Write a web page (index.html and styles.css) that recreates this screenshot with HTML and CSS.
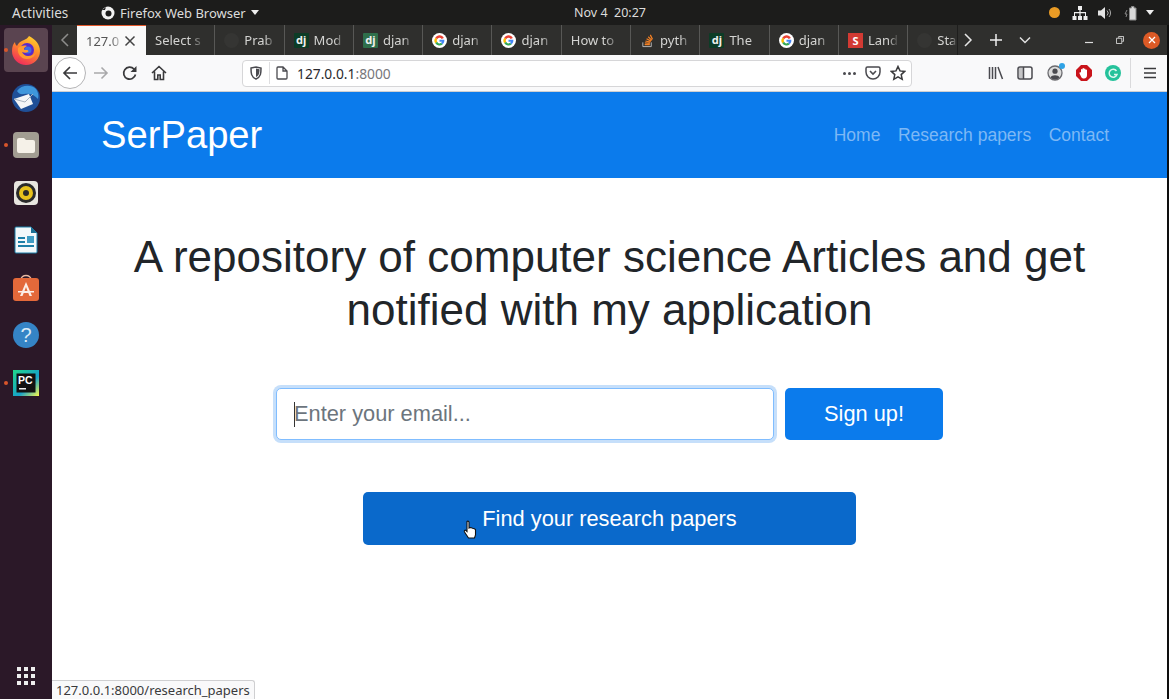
FILE: index.html
```html
<!DOCTYPE html>
<html lang="en">
<head>
    <meta charset="UTF-8">
    <meta name="viewport" content="width=device-width, initial-scale=1.0">
    <title>SerPaper</title>
    <link rel="stylesheet" href="styles.css">
</head>
<body>
    <svg class="defs" width="0" height="0">
        <symbol id="google" viewBox="0 0 16 16">
            <circle cx="8" cy="8" r="8" fill="#fff"/>
            <path d="M12.6 5.2A5.3 5.3 0 0 0 3.5 5l2 1.600A2.800 2.800 0 0 1 10.300 6.300z" fill="#ea4335"/>
            <path d="M3.500 5a5.300 5.300 0 0 0 0 6l2-1.600a2.800 2.800 0 0 1 0-2.800z" fill="#fbbc05"/>
            <path d="M3.500 11a5.300 5.300 0 0 0 8 1l-1.900-1.500a2.800 2.800 0 0 1-4.100-1.100z" fill="#34a853"/>
            <path d="M11.500 12a5.300 5.300 0 0 0 1.700-4.800H8v2.200h2.800a2.500 2.500 0 0 1-1.200 1.100z" fill="#4285f4"/>
        </symbol>
    </svg>

    <div class="topbar">
        <span class="activities">Activities</span>
        <span class="app-menu">
            <svg width="16" height="16" viewBox="0 0 16 16"><circle cx="8" cy="8" r="6.500" fill="#f2f2f2"/><circle cx="8.500" cy="8.500" r="3" fill="#1c1c1c"/><path d="M2 5l4-3-1 3z" fill="#1c1c1c"/></svg>
            Firefox Web Browser
            <i class="arrow-down"></i>
        </span>
        <span class="clock">Nov 4&nbsp;&nbsp;20:27</span>
        <span class="tray">
            <i class="tray-dot"></i>
            <svg class="tray-net" width="16" height="14" viewBox="0 0 16 14"><path d="M6 0h4v4H8.600v2H14v4h1.500v4h-4v-4H13V7.200H8.600V10H10v4H6v-4h1.400V7.200H3V10h1.500v4h-4v-4H2V6h5.400V4H6z" fill="#eee"/></svg>
            <svg class="tray-vol" width="16" height="14" viewBox="0 0 16 14"><path d="M1 4.500h3L8 1v12L4 9.500H1z" fill="#e4e4e4"/><path d="M10 4.500a3.500 3.500 0 0 1 0 5M12 3a6 6 0 0 1 0 8" stroke="#aaa" fill="none"/></svg>
            <svg class="tray-bat" width="16" height="16" viewBox="0 0 16 16"><path d="M5.500 3h2V1.500h2.500V3h2v12H5.500z" fill="#d8d8d8" stroke="#8a8a8a"/><path d="M3 5L1 9h2l-1 3" stroke="#888" fill="none"/></svg>
            <i class="arrow-down"></i>
        </span>
    </div>

    <div class="desktop">
        <nav class="dock">
            <div class="dock-item dock-active">
                <i class="run-dot"></i>
                <svg width="30" height="30" viewBox="0 0 30 30">
                    <defs>
                        <linearGradient id="ffbody" x1="0.800" y1="0" x2="0.300" y2="1">
                            <stop offset="0" stop-color="#ffd52e"/>
                            <stop offset="0.450" stop-color="#ff8a2b"/>
                            <stop offset="1" stop-color="#ee2a5d"/>
                        </linearGradient>
                    </defs>
                    <path d="M18 1c6 3 11 8 11 15a14 14 0 0 1-28 0c0-4 1-7 3-9 0 2 1 3 2 4 1-3 4-5 7-6 2-1 4-2 5-4z" fill="url(#ffbody)"/>
                    <circle cx="16" cy="15" r="7" fill="#592acb"/>
                    <circle cx="17" cy="15" r="3.500" fill="#3f6fe0"/>
                    <path d="M7 13c-1 6 3 11 9 11 5 0 8-3 9-7-2 3-5 4-8 4-3 0-5-2-6-4 2 1 4 1 6 0 1-1 0-2-1-2-2 0-3 0-3-1 0-1 1-2 3-3-3-1-7 0-9 2z" fill="#ff9a2e"/>
                </svg>
            </div>
            <div class="dock-item">
                <svg width="30" height="30" viewBox="0 0 30 30">
                    <circle cx="15" cy="15" r="14" fill="#1f4f97"/>
                    <path d="M6 8C10 2 20 1 25 6c2 3 3 6 2 10-4-5-9-6-14-5-3 .5-5 0-7-3z" fill="#3f97dc"/>
                    <path d="M3 16l15-5 4 10-12 5z" fill="#f3f5f7"/>
                    <path d="M3 16l11 3 8-8" stroke="#a9b4c0" fill="none"/>
                </svg>
            </div>
            <div class="dock-item">
                <i class="run-dot"></i>
                <svg width="28" height="28" viewBox="0 0 28 28">
                    <rect x="1" y="1" width="26" height="26" rx="4" fill="#a29d92"/>
                    <path d="M5 9a2 2 0 0 1 2-2h5l2 2h7a2 2 0 0 1 2 2v9a2 2 0 0 1-2 2H7a2 2 0 0 1-2-2z" fill="#f5f1e8"/>
                </svg>
            </div>
            <div class="dock-item">
                <svg width="26" height="26" viewBox="0 0 26 26">
                    <rect x="1" y="1" width="24" height="24" rx="4" fill="#e8e6e0"/>
                    <circle cx="13" cy="13" r="10" fill="#2b2b2b"/>
                    <circle cx="13" cy="13" r="7" fill="#e8c21c"/>
                    <circle cx="13" cy="13" r="3" fill="#2b2b2b"/>
                </svg>
            </div>
            <div class="dock-item">
                <svg width="24" height="28" viewBox="0 0 24 28">
                    <path d="M1 2a1 1 0 0 1 1-1h15l6 6v19a1 1 0 0 1-1 1H2a1 1 0 0 1-1-1z" fill="#f2f8fb" stroke="#1b7fa8"/>
                    <path d="M17 1l6 6h-6z" fill="#1b6f94"/>
                    <path d="M4 11h7v2H4zm0 4h7v2H4zm0 4h16v2H4z" fill="#1b7fa8"/>
                    <path d="M13 10h7v7h-7z" fill="#3f9cc4"/>
                </svg>
            </div>
            <div class="dock-item">
                <svg width="26" height="28" viewBox="0 0 26 28">
                    <path d="M8 6c0-6 10-6 10 0" stroke="#e9b9a2" stroke-width="1.500" fill="none"/>
                    <rect y="4" width="26" height="23" rx="3" fill="#e3693a"/>
                    <path d="M13 8l-6 14h2.500l1.200-3h4.600l1.200 3H19zm0 5l1.500 4h-3z" fill="#fbeee6"/>
                    <path d="M5 17h16v1.500H5z" fill="#fbeee6"/>
                </svg>
            </div>
            <div class="dock-item">
                <svg width="26" height="26" viewBox="0 0 26 26">
                    <circle cx="13" cy="13" r="13" fill="#3584c6"/>
                    <text x="13" y="20" class="help-mark">?</text>
                </svg>
            </div>
            <div class="dock-item">
                <i class="run-dot"></i>
                <svg width="26" height="26" viewBox="0 0 26 26">
                    <defs>
                        <linearGradient id="pc" x1="0" y1="0" x2="1" y2="1">
                            <stop offset="0" stop-color="#21d789"/>
                            <stop offset="0.600" stop-color="#17a2c9"/>
                            <stop offset="1" stop-color="#fcf84a"/>
                        </linearGradient>
                    </defs>
                    <rect width="26" height="26" fill="url(#pc)"/>
                    <rect x="3.500" y="3.500" width="19" height="19" fill="#111"/>
                    <text x="5" y="13.500" class="pc-mark">PC</text>
                    <rect x="6" y="18" width="7" height="1.500" fill="#eee"/>
                </svg>
            </div>
            <div class="dock-apps">
                <svg width="20" height="20" viewBox="0 0 20 20" fill="#eee">
                    <rect x="1" y="1" width="4" height="4"/><rect x="8" y="1" width="4" height="4"/><rect x="15" y="1" width="4" height="4"/>
                    <rect x="1" y="8" width="4" height="4"/><rect x="8" y="8" width="4" height="4"/><rect x="15" y="8" width="4" height="4"/>
                    <rect x="1" y="15" width="4" height="4"/><rect x="8" y="15" width="4" height="4"/><rect x="15" y="15" width="4" height="4"/>
                </svg>
            </div>
        </nav>

        <div class="browser">
            <div class="tabstrip">
                <span class="tab-scroll">
                    <svg width="10" height="14" viewBox="0 0 10 14"><path d="M8 1L2 7l6 6" stroke="#8d8d8b" stroke-width="1.500" fill="none"/></svg>
                </span>
                <div class="tab tab-active">
                    <span class="tab-label">127.0</span>
                    <svg width="12" height="12" viewBox="0 0 12 12"><path d="M1.500 1.500l9 9m0-9l-9 9" stroke="#444" stroke-width="1.500"/></svg>
                </div>
                <div class="tab"><span class="tab-label">Select s</span></div>
                <div class="tab"><span class="fav fav-dim"></span><span class="tab-label">Prab</span></div>
                <div class="tab"><span class="fav fav-dj">dj</span><span class="tab-label">Mod</span></div>
                <div class="tab"><span class="fav fav-dj fav-dj-green">dj</span><span class="tab-label">djan</span></div>
                <div class="tab"><svg class="fav" viewBox="0 0 16 16"><use href="#google"/></svg><span class="tab-label">djan</span></div>
                <div class="tab"><svg class="fav" viewBox="0 0 16 16"><use href="#google"/></svg><span class="tab-label">djan</span></div>
                <div class="tab"><span class="tab-label">How to</span></div>
                <div class="tab">
                    <svg class="fav" viewBox="0 0 16 16"><path d="M3 10v4.500h9V10" stroke="#bcbbbb" fill="none"/><path d="M5 12.500h5.500M5.200 10.500l5.300.5M5.800 8.500l5.200 1.300M7 6.200l4.700 2.500M8.800 4l3.800 3.800M11 2l2.300 4.800" stroke="#f48024" stroke-width="1.300"/></svg>
                    <span class="tab-label">pyth</span>
                </div>
                <div class="tab"><span class="fav fav-dj">dj</span><span class="tab-label">The</span></div>
                <div class="tab"><svg class="fav" viewBox="0 0 16 16"><use href="#google"/></svg><span class="tab-label">djan</span></div>
                <div class="tab"><span class="fav fav-s">S</span><span class="tab-label">Land</span></div>
                <div class="tab tab-last"><span class="fav fav-dim"></span><span class="tab-label">Sta</span></div>
                <div class="tab-actions">
                    <svg class="act-next" width="10" height="14" viewBox="0 0 10 14"><path d="M2 1l6 6-6 6" stroke="#e6e6e6" stroke-width="1.500" fill="none"/></svg>
                    <svg class="act-new" width="14" height="14" viewBox="0 0 14 14"><path d="M7 1v12M1 7h12" stroke="#eee" stroke-width="1.500"/></svg>
                    <svg class="act-list" width="12" height="8" viewBox="0 0 12 8"><path d="M1 1.500l5 5 5-5" stroke="#e0e0e0" stroke-width="1.500" fill="none"/></svg>
                </div>
                <div class="win-controls">
                    <svg width="8" height="8" viewBox="0 0 8 8"><path d="M0 6.500h8" stroke="#ddd" stroke-width="1.200"/></svg>
                    <svg class="win-restore" width="8" height="8" viewBox="0 0 9 9"><path d="M3 2V.5h5.500V6H7M.5 2.500H6.500v6H.5z" stroke="#ddd" fill="none"/></svg>
                    <span class="win-close">
                        <svg width="8" height="8" viewBox="0 0 8 8"><path d="M1 1l6 6m0-6L1 7" stroke="#fff" stroke-width="1.300"/></svg>
                    </span>
                </div>
            </div>

            <div class="toolbar">
                <span class="back-btn">
                    <svg width="16" height="16" viewBox="0 0 16 16"><path d="M15 8H2M8 2L2 8l6 6" stroke="#3a3a3c" stroke-width="1.700" fill="none"/></svg>
                </span>
                <span class="tool-btn">
                    <svg width="16" height="16" viewBox="0 0 16 16"><path d="M1 8h13M8.500 2.500L14 8l-5.500 5.500" stroke="#a9a9ab" stroke-width="1.600" fill="none"/></svg>
                </span>
                <span class="tool-btn">
                    <svg width="16" height="16" viewBox="0 0 16 16"><path d="M13.500 9.500A6 6 0 1 1 12 4l1.500 1.500" stroke="#3a3a3c" stroke-width="1.700" fill="none"/><path d="M14.500 1v6h-6z" fill="#3a3a3c"/></svg>
                </span>
                <span class="tool-btn">
                    <svg width="16" height="16" viewBox="0 0 16 16"><path d="M1 8l7-6.500L15 8M3.500 6.500V14.500h3.300V10h2.400v4.500h3.300V6.500" stroke="#3a3a3c" stroke-width="1.600" fill="none"/></svg>
                </span>
                <div class="urlbar">
                    <svg class="url-shield" width="12" height="14" viewBox="0 0 12 14"><path d="M1 2l5-1 5 1c0 5 0 9-5 11C1 11 1 7 1 2z" stroke="#4a4a4f" stroke-width="1.500" fill="none"/><path d="M6 2.500l3.500.7C9.500 7 9 9.500 6 11z" fill="#4a4a4f"/></svg>
                    <i class="url-divider"></i>
                    <svg class="url-page" width="12" height="14" viewBox="0 0 12 14"><path d="M1 2a1 1 0 0 1 1-1h5l4 4v7a1 1 0 0 1-1 1H2a1 1 0 0 1-1-1zM7 1v4h4" stroke="#4a4a4f" stroke-width="1.300" fill="none"/></svg>
                    <span class="url-text">127.0.0.1<span class="url-port">:8000</span></span>
                    <span class="url-dots"><i></i><i></i><i></i></span>
                    <svg class="url-pocket" width="16" height="14" viewBox="0 0 16 14"><path d="M1 2.500A1.500 1.500 0 0 1 2.500 1h11A1.500 1.500 0 0 1 15 2.500V6a7 7 0 0 1-14 0z" stroke="#4a4a4f" stroke-width="1.500" fill="none"/><path d="M5 5l3 3 3-3" stroke="#4a4a4f" stroke-width="1.600" fill="none"/></svg>
                    <svg class="url-star" width="16" height="16" viewBox="0 0 16 16"><path d="M8 1.500l2 4.400 4.700.5-3.500 3.200 1 4.700L8 11.900l-4.200 2.400 1-4.700L1.300 6.400 6 5.900z" stroke="#3a3a3c" stroke-width="1.500" fill="none"/></svg>
                </div>
                <div class="tool-right">
                    <svg width="16" height="14" viewBox="0 0 16 14"><path d="M1.500 1v12M4.500 1v12M7.500 1v12M10 1l4.500 12" stroke="#4a4a4f" stroke-width="1.500"/></svg>
                    <svg width="16" height="14" viewBox="0 0 16 14"><rect x="1" y="1" width="14" height="12" rx="2" stroke="#4a4a4f" stroke-width="1.500" fill="none"/><path d="M2 2h4v10H2z" fill="#4a4a4f" opacity="0.300"/><path d="M6.500 1v12" stroke="#4a4a4f" stroke-width="1.500"/></svg>
                    <span class="account">
                        <svg width="16" height="16" viewBox="0 0 16 16"><circle cx="8" cy="8" r="7" stroke="#6a6a6e" stroke-width="1.300" fill="#dcdcdc"/><circle cx="8" cy="6.200" r="2.600" fill="#4a4a4f"/><path d="M3.500 12.500c1-3 8-3 9 0-2 2.500-7 2.500-9 0z" fill="#4a4a4f"/></svg>
                        <i class="account-dot"></i>
                    </span>
                    <svg width="16" height="16" viewBox="0 0 16 16"><path d="M5 0h6l5 5v6l-5 5H5l-5-5V5z" fill="#c9141b"/><path d="M5 7.500V4.500a.8.800 0 0 1 1.500 0V3.500a.8.800 0 0 1 1.500 0v.500a.8.800 0 0 1 1.500 0v1a.8.800 0 0 1 1.500 0v5c0 2-1 3.500-3 3.500-1.500 0-2.500-.5-3-2L3.500 8.500c-.3-1 .8-1.500 1.500-1z" fill="#fff"/></svg>
                    <svg width="16" height="16" viewBox="0 0 16 16"><circle cx="8" cy="8" r="8" fill="#25c29b"/><path d="M11.500 6A4 4 0 1 0 12 9.500H9" stroke="#dff7f0" stroke-width="1.500" fill="none"/></svg>
                </div>
                <i class="tool-divider"></i>
                <svg class="tool-menu" width="14" height="12" viewBox="0 0 14 12"><path d="M1 1.500h12M1 6h12M1 10.500h12" stroke="#3a3a3c" stroke-width="1.600"/></svg>
            </div>

            <div class="page">
                <header class="site-header">
                    <a class="brand">SerPaper</a>
                    <ul class="site-nav">
                        <li>Home</li>
                        <li>Research papers</li>
                        <li>Contact</li>
                    </ul>
                </header>
                <main class="hero">
                    <h1>A repository of computer science Articles and get notified with my application</h1>
                    <form class="signup">
                        <div class="email-wrap">
                            <input type="email" class="email-input" placeholder="Enter your email...">
                            <i class="caret"></i>
                        </div>
                        <button type="button" class="btn-signup">Sign up!</button>
                    </form>
                    <div class="find-wrap">
                        <a class="btn-find">Find your research papers</a>
                        <svg class="hand" width="16" height="19" viewBox="0 0 16 19"><path d="M4 1.500c1-.8 2 0 2 1V8l1-.5 1.500.3 1 .5 1.400.2 1.600 1V15l-1 3H5.500L1.500 12c-.7-1.200.5-2.300 1.500-1.500L4 11.500z" fill="#fff" stroke="#111" stroke-width="1.100"/></svg>
                    </div>
                </main>
                <div class="status-link">127.0.0.1:8000/research_papers</div>
            </div>
        </div>
    </div>
</body>
</html>
```

FILE: styles.css
```css
* {
    box-sizing: border-box;
}
html, body {
    margin: 0;
    height: 100%;
    overflow: hidden;
}
body {
    font-family: "Liberation Sans", Arial, sans-serif;
    background: #0e0e0e;
    display: flex;
    flex-direction: column;
}
i {
    display: block;
}
.defs {
    position: absolute;
}

/* ubuntu top bar */
.topbar {
    height: 25px;
    flex: none;
    background: #1c1c1b;
    color: #dcdcdc;
    font-family: "Noto Sans", sans-serif;
    font-size: 13px;
    display: flex;
    align-items: center;
    padding: 0 15.500px 0 12px;
    position: relative;
}
.activities {
    width: 88px;
    font-size: 13.500px;
}
.app-menu {
    display: flex;
    align-items: center;
    gap: 4px;
}
.arrow-down {
    width: 0;
    height: 0;
    border: 4.500px solid transparent;
    border-top: 5px solid #eee;
    border-bottom: 0;
    margin-left: 1px;
}
.clock {
    position: absolute;
    left: 574px;
    font-size: 12.500px;
}
.tray {
    margin-left: auto;
    display: flex;
    align-items: center;
}
.tray-dot {
    width: 11px;
    height: 11px;
    border-radius: 50%;
    background: #e99b25;
}
.tray-net {
    margin-left: 12px;
}
.tray-vol {
    margin-left: 9px;
}
.tray-bat {
    margin: 0 5px 0 11px;
}

/* main area */
.desktop {
    flex: 1;
    display: flex;
    min-height: 0;
    padding-right: 2px;
}

/* dock */
.dock {
    width: 52px;
    flex: none;
    background: #2b1828;
    display: flex;
    flex-direction: column;
    align-items: center;
    padding-top: 3px;
    position: relative;
}
.dock-item {
    width: 44px;
    height: 44px;
    margin-bottom: 3.500px;
    border-radius: 4px;
    display: flex;
    align-items: center;
    justify-content: center;
    position: relative;
}
.dock-active {
    background: #5a4450;
}
.run-dot {
    position: absolute;
    left: 0;
    top: 20px;
    width: 4px;
    height: 4px;
    border-radius: 50%;
    background: #d9562b;
}
.dock-apps {
    margin-top: auto;
    margin-bottom: 13px;
    display: flex;
}
.help-mark {
    font-family: "Liberation Sans", sans-serif;
    font-size: 20px;
    fill: #dcebf7;
    text-anchor: middle;
}
.pc-mark {
    font-family: "Liberation Sans", sans-serif;
    font-size: 10.500px;
    font-weight: bold;
    fill: #fff;
}

/* browser window */
.browser {
    flex: 1;
    min-width: 0;
    display: flex;
    flex-direction: column;
}
.tabstrip {
    height: 30px;
    flex: none;
    background: #2f2f2d;
    display: flex;
    color: #d4d4d2;
    font-family: "Noto Sans", sans-serif;
    font-size: 13px;
}
.tab-scroll {
    width: 25px;
    flex: none;
    display: flex;
    align-items: center;
    justify-content: center;
}
.tab {
    width: 69.300px;
    flex: none;
    display: flex;
    align-items: center;
    gap: 5px;
    padding: 0 8px 0 9px;
    border-right: 1px solid #585856;
    overflow: hidden;
}
.tab-active {
    width: 69px;
    background: #f9f9f9;
    border-top: 1px solid #e3582b;
    border-right: 0;
    color: #555;
    gap: 0;
    padding-right: 10px;
}
.tab-last {
    width: 50px;
    padding-right: 0;
    border-right: 1px solid #1e1e1d;
}
.tab-label {
    flex: 1;
    min-width: 0;
    white-space: nowrap;
    -webkit-mask-image: linear-gradient(to right, #000 65%, transparent 100%);
    mask-image: linear-gradient(to right, #000 65%, transparent 100%);
}
.fav {
    width: 15px;
    height: 15px;
    flex: none;
}
.fav-dim {
    border-radius: 50%;
    background: #353533;
}
.fav-dj {
    background: #0c3c26;
    color: #f0f0f0;
    font-size: 11px;
    font-weight: bold;
    line-height: 14px;
    text-align: center;
    border-radius: 1px;
}
.fav-dj-green {
    background: #2f6f4b;
}
.fav-s {
    background: #d23a33;
    color: #fff;
    font-size: 11px;
    font-weight: bold;
    line-height: 15px;
    text-align: center;
}
.tab-actions {
    width: 90px;
    flex: none;
    display: flex;
    align-items: center;
}
.act-next {
    margin-left: 5px;
}
.act-new {
    margin-left: 16px;
}
.act-list {
    margin-left: 16px;
}
.win-controls {
    margin-left: auto;
    flex: none;
    display: flex;
    align-items: center;
    padding-right: 7px;
}
.win-restore {
    margin-left: 23px;
}
.win-close {
    width: 17px;
    height: 17px;
    margin-left: 19px;
    border-radius: 50%;
    background: #dc5a26;
    display: flex;
    align-items: center;
    justify-content: center;
}

/* toolbar */
.toolbar {
    height: 37px;
    flex: none;
    background: #f9f9fa;
    border-bottom: 1px solid #cfcfd1;
    display: flex;
    align-items: center;
    padding-left: 2px;
}
.back-btn {
    width: 32px;
    height: 32px;
    flex: none;
    border: 1px solid #b4b4b6;
    border-radius: 50%;
    background: #fff;
    display: flex;
    align-items: center;
    justify-content: center;
}
.tool-btn {
    width: 29px;
    flex: none;
    display: flex;
    justify-content: center;
}
.urlbar {
    width: 670px;
    height: 27px;
    flex: none;
    margin-left: 69px;
    background: #fff;
    border: 1px solid #d6d6d8;
    border-radius: 4px;
    display: flex;
    align-items: center;
    padding-left: 7px;
    font-family: "Noto Sans", sans-serif;
    font-size: 13.800px;
    color: #2a2a2e;
}
.url-divider {
    width: 1px;
    height: 22px;
    background: #dedee0;
    margin: 0 6px 0 7px;
}
.url-page {
    flex: none;
}
.url-text {
    margin-left: 9px;
}
.url-port {
    color: #77777b;
}
.url-dots {
    margin-left: auto;
    display: flex;
    gap: 2px;
}
.url-dots i {
    width: 3px;
    height: 3px;
    border-radius: 50%;
    background: #4a4a4f;
}
.url-pocket {
    margin-left: 9px;
}
.url-star {
    margin: 0 5px 0 9px;
}
.tool-right {
    margin-left: 76px;
    display: flex;
    align-items: center;
    gap: 13.300px;
}
.account {
    position: relative;
    display: flex;
}
.account-dot {
    position: absolute;
    right: -2px;
    top: -2px;
    width: 6px;
    height: 6px;
    border-radius: 50%;
    background: #2fa3e6;
}
.tool-divider {
    width: 1px;
    height: 30px;
    background: #dadadc;
    margin-left: 9px;
}
.tool-menu {
    margin-left: 12px;
}

/* page content */
.page {
    flex: 1;
    min-height: 0;
    background: #fff;
    position: relative;
}
.site-header {
    height: 86px;
    background: #0b7bec;
    display: flex;
    align-items: center;
    justify-content: space-between;
    padding: 0 58px 0 49px;
}
.brand {
    color: #fff;
    font-size: 38.200px;
}
.site-nav {
    list-style: none;
    margin: 0;
    padding: 0;
    display: flex;
    gap: 17.500px;
    font-size: 17.500px;
    color: #7db8f5;
}
.hero {
    display: flex;
    flex-direction: column;
    align-items: center;
}
h1 {
    font-size: 44px;
    font-weight: 400;
    line-height: 53px;
    color: #212529;
    text-align: center;
    margin: 52px 0;
    width: 1000px;
}
.signup {
    display: flex;
    gap: 11px;
}
.email-wrap {
    position: relative;
}
.email-input {
    display: block;
    width: 498px;
    height: 52px;
    padding: 0 17px;
    font-family: inherit;
    font-size: 21.800px;
    border: 1px solid #80bdff;
    border-radius: 5px;
    box-shadow: 0 0 0 3px #c6dffa;
    outline: none;
}
.email-input::placeholder {
    color: #6c757d;
}
.caret {
    position: absolute;
    left: 18px;
    top: 14px;
    width: 1px;
    height: 25px;
    background: #333;
}
.btn-signup {
    width: 158px;
    height: 52px;
    background: #0b7bec;
    color: #fff;
    border: none;
    border-radius: 5px;
    font-family: inherit;
    font-size: 21.800px;
}
.find-wrap {
    position: relative;
    margin-top: 52px;
}
.btn-find {
    display: block;
    width: 493px;
    height: 53px;
    line-height: 53px;
    background: #0a69cb;
    color: #fff;
    border-radius: 5px;
    font-size: 21.800px;
    text-align: center;
}
.hand {
    position: absolute;
    left: 100px;
    top: 28px;
}
.status-link {
    position: absolute;
    left: 0;
    bottom: 0;
    height: 19px;
    padding: 0 4px;
    background: #f9f9fa;
    border: 1px solid #cfcfd1;
    border-left: 0;
    border-bottom: 0;
    border-top-right-radius: 3px;
    font-family: "Noto Sans", sans-serif;
    font-size: 13px;
    line-height: 18px;
    color: #3a3a3c;
}
```
